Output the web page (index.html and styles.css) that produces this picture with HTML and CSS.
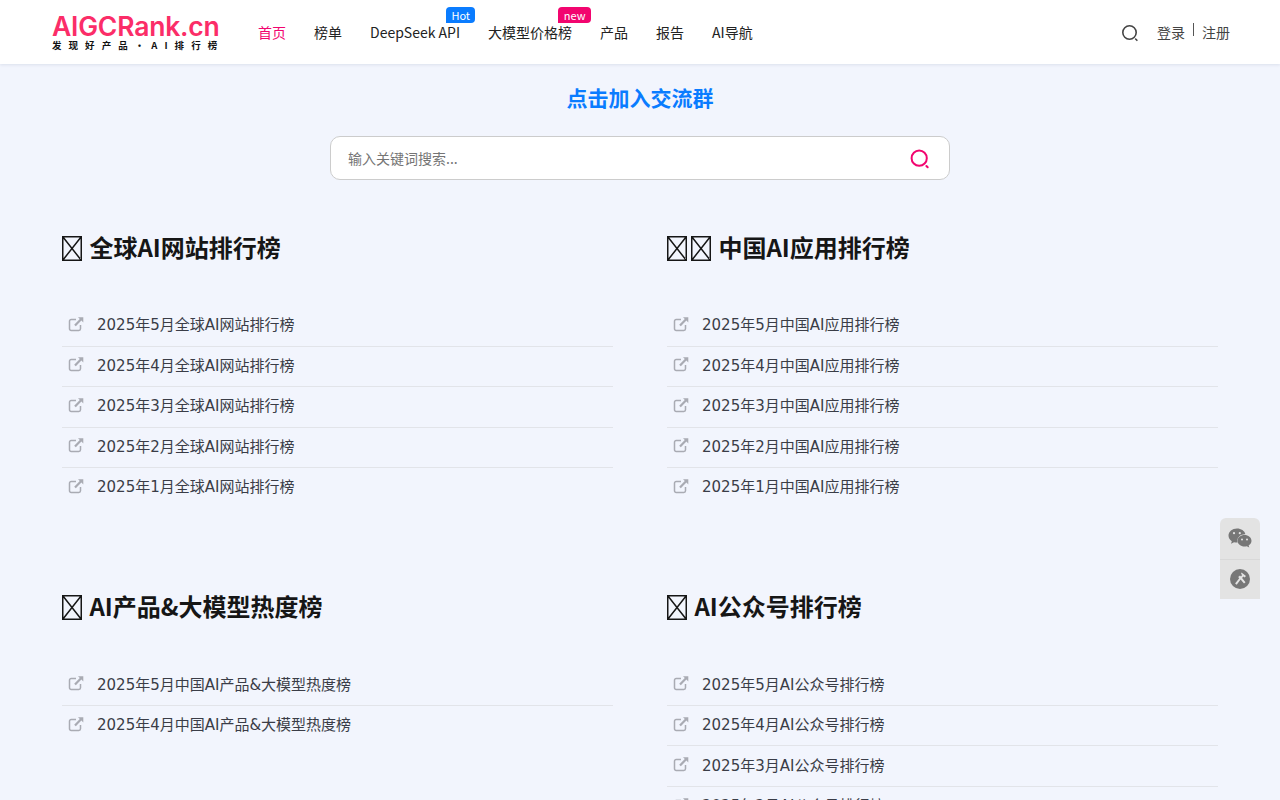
FILE: index.html
```html
<!DOCTYPE html>
<html lang="zh-CN">
<head>
  <meta charset="UTF-8" />
  <meta name="viewport" content="width=device-width, initial-scale=1.0" />
  <title>AIGCRank.cn</title>
  <link rel="stylesheet" href="styles.css">
</head>
<body>

  <svg width="0" height="0" class="sprite">
    <symbol id="icon-link" viewBox="0 0 16 16">
      <path d="M12.5 9v3.8a1.7 1.7 0 0 1-1.7 1.7H3.2a1.7 1.700 0 0 1-1.7-1.7V5.2a1.7 1.7 0 0 1 1.7-1.7H8" fill="none" stroke="currentColor" stroke-width="1.5"/>
      <path d="M10 1.2h5.3v5.3l-1.9-1.9-5.600 5.7-1.600-1.600 5.600-5.600z" fill="currentColor"/>
    </symbol>
    <symbol id="icon-tofu" viewBox="0 0 20 25">
      <path d="M.75.75h18.500v23.500H.75zM.75.75l18.500 23.500M19.250.75L.75 24.250" fill="none" stroke="currentColor" stroke-width="1.500"/>
    </symbol>
  </svg>

  <header class="topbar">
    <a class="logo" href="#">
      <span class="logo-name">AIGCRank.cn</span>
      <span class="logo-sub">发现好产品·AI排行榜</span>
    </a>
    <nav class="nav">
      <a class="nav-item active" href="#">首页</a>
      <a class="nav-item" href="#">榜单</a>
      <a class="nav-item" href="#">DeepSeek API<span class="badge badge-hot">Hot</span></a>
      <a class="nav-item" href="#">大模型价格榜<span class="badge badge-new">new</span></a>
      <a class="nav-item" href="#">产品</a>
      <a class="nav-item" href="#">报告</a>
      <a class="nav-item" href="#">AI导航</a>
    </nav>
    <div class="user-links">
      <svg class="top-search" viewBox="0 0 18 18" width="18" height="18">
        <circle cx="8.500" cy="8.500" r="6.700" fill="none" stroke="currentColor" stroke-width="1.600"/>
        <path d="M14.600 15l1.300 1.300" stroke="currentColor" stroke-width="1.600" stroke-linecap="round"/>
      </svg>
      <a href="#" class="user-link">登录</a>
      <span class="user-sep"></span>
      <a href="#" class="user-link">注册</a>
    </div>
  </header>

  <main class="main">
    <a class="join-link" href="#">点击加入交流群</a>

    <div class="search-box">
      <span class="search-text">输入关键词搜索...</span>
      <svg class="search-icon" viewBox="0 0 20 20" width="20" height="20">
        <circle cx="9.200" cy="9.200" r="7.600" fill="none" stroke="currentColor" stroke-width="2"/>
        <path d="M16.400 17l1.300 1.300" stroke="currentColor" stroke-width="2" stroke-linecap="round"/>
      </svg>
    </div>

    <div class="boards">
      <section class="board">
        <h2 class="board-title"><svg class="tofu"><use href="#icon-tofu"/></svg> 全球AI网站排行榜</h2>
        <ul class="rank-list">
          <li class="rank-row"><svg class="link-icon"><use href="#icon-link"/></svg>2025年5月全球AI网站排行榜</li>
          <li class="rank-row"><svg class="link-icon"><use href="#icon-link"/></svg>2025年4月全球AI网站排行榜</li>
          <li class="rank-row"><svg class="link-icon"><use href="#icon-link"/></svg>2025年3月全球AI网站排行榜</li>
          <li class="rank-row"><svg class="link-icon"><use href="#icon-link"/></svg>2025年2月全球AI网站排行榜</li>
          <li class="rank-row"><svg class="link-icon"><use href="#icon-link"/></svg>2025年1月全球AI网站排行榜</li>
        </ul>
      </section>

      <section class="board">
        <h2 class="board-title"><svg class="tofu"><use href="#icon-tofu"/></svg><svg class="tofu"><use href="#icon-tofu"/></svg> 中国AI应用排行榜</h2>
        <ul class="rank-list">
          <li class="rank-row"><svg class="link-icon"><use href="#icon-link"/></svg>2025年5月中国AI应用排行榜</li>
          <li class="rank-row"><svg class="link-icon"><use href="#icon-link"/></svg>2025年4月中国AI应用排行榜</li>
          <li class="rank-row"><svg class="link-icon"><use href="#icon-link"/></svg>2025年3月中国AI应用排行榜</li>
          <li class="rank-row"><svg class="link-icon"><use href="#icon-link"/></svg>2025年2月中国AI应用排行榜</li>
          <li class="rank-row"><svg class="link-icon"><use href="#icon-link"/></svg>2025年1月中国AI应用排行榜</li>
        </ul>
      </section>

      <section class="board">
        <h2 class="board-title"><svg class="tofu"><use href="#icon-tofu"/></svg> AI产品&amp;大模型热度榜</h2>
        <ul class="rank-list">
          <li class="rank-row"><svg class="link-icon"><use href="#icon-link"/></svg>2025年5月中国AI产品&amp;大模型热度榜</li>
          <li class="rank-row"><svg class="link-icon"><use href="#icon-link"/></svg>2025年4月中国AI产品&amp;大模型热度榜</li>
        </ul>
      </section>

      <section class="board">
        <h2 class="board-title"><svg class="tofu"><use href="#icon-tofu"/></svg> AI公众号排行榜</h2>
        <ul class="rank-list">
          <li class="rank-row"><svg class="link-icon"><use href="#icon-link"/></svg>2025年5月AI公众号排行榜</li>
          <li class="rank-row"><svg class="link-icon"><use href="#icon-link"/></svg>2025年4月AI公众号排行榜</li>
          <li class="rank-row"><svg class="link-icon"><use href="#icon-link"/></svg>2025年3月AI公众号排行榜</li>
          <li class="rank-row"><svg class="link-icon"><use href="#icon-link"/></svg>2025年2月AI公众号排行榜</li>
        </ul>
      </section>
    </div>
  </main>

  <aside class="side-tools">
    <a class="side-tool" href="#">
      <svg viewBox="0 0 24 20" width="24" height="20">
        <path d="M9 0.5C4.3 0.5 0.5 3.7 0.5 7.6c0 2.3 1.3 4.3 3.3 5.6L3 15.8l3-1.6c1 .3 2 .4 3 .4h.6a6 6 0 0 1-.3-1.8c0-3.7 3.4-6.6 7.6-6.6h.5C16.600 2.800 13.100 0.500 9 0.500z" fill="currentColor"/>
        <path d="M23.500 12.700c0-3.200-3.200-5.800-7-5.800s-7 2.600-7 5.800 3.200 5.800 7 5.800c.8 0 1.600-.1 2.300-.3l2.500 1.300-.7-2.100c1.800-1.100 2.900-2.800 2.900-4.700z" fill="currentColor"/>
        <circle cx="6" cy="5.200" r="1.100" fill="#e3e3e3"/>
        <circle cx="11.800" cy="5.200" r="1.100" fill="#e3e3e3"/>
        <circle cx="14" cy="11.400" r="1" fill="#e3e3e3"/>
        <circle cx="19" cy="11.400" r="1" fill="#e3e3e3"/>
      </svg>
    </a>
    <a class="side-tool" href="#">
      <svg viewBox="0 0 20 20" width="20" height="20">
        <circle cx="10" cy="10" r="10" fill="currentColor"/>
        <path d="M11.500 3.500l4.500 3.500-1.400 1.500-1.300-.9-1.200 1.500 3.400 4.200-1.500 1.300-3.400-4-3.900 5.200-1.600-1.200 4.100-5.400-1-1.200 1.800-1.500 1 1.100 1.100-1.500-1-1z" fill="#e3e3e3"/>
      </svg>
    </a>
  </aside>

</body>
</html>
```

FILE: styles.css
```css
* {
  box-sizing: border-box;
}

html,
body {
  height: 800px;
  overflow: hidden;
}

body {
  margin: 0;
  background: #f2f5fd;
  color: #222;
  font-family: "Noto Sans CJK SC", "Noto Sans", sans-serif;
}

a {
  color: inherit;
  text-decoration: none;
}

.sprite {
  display: block;
}

.topbar {
  display: flex;
  align-items: center;
  height: 64px;
  padding: 0 50px 1px 52px;
  background: #fff;
  box-shadow: 0 1px 3px rgba(30, 50, 90, 0.1);
}

.logo {
  display: flex;
  flex-direction: column;
  width: 168px;
  margin-right: 38px;
}

.logo-name {
  font-family: Inter, "Liberation Sans", sans-serif;
  font-size: 26.5px;
  font-weight: 600;
  line-height: 26px;
  letter-spacing: -0.2px;
  color: #fb2d68;
}

.logo-sub {
  font-size: 9.5px;
  font-weight: 700;
  line-height: 12px;
  letter-spacing: 7.05px;
  white-space: nowrap;
  color: #111;
}

.nav {
  display: flex;
  gap: 28px;
  flex: 1;
}

.nav-item {
  position: relative;
  font-size: 14px;
  line-height: 22px;
  color: #222;
}

.nav-item.active {
  color: #f2056f;
}

.badge {
  position: absolute;
  top: -14px;
  height: 16px;
  padding: 0 5px;
  border-radius: 4px 4px 4px 0;
  font-size: 11px;
  line-height: 16px;
  color: #fff;
}

.badge-hot {
  right: -15px;
  background: #0a7cff;
}

.badge-new {
  right: -19px;
  padding: 0 5.5px;
  background: #f2056f;
}

.user-links {
  display: flex;
  align-items: center;
  font-size: 14px;
  color: #444;
}

.top-search {
  margin-right: 18px;
  color: #444;
  transform: translateY(1px);
}

.user-sep {
  width: 1px;
  height: 13px;
  margin: 0 8px;
  background: #555;
  transform: translateY(-2px);
}

.main {
  padding: 0 62px;
}

.join-link {
  display: block;
  margin-top: 18px;
  text-align: center;
  font-size: 21px;
  font-weight: 700;
  line-height: 30px;
  color: #0a7cff;
}

.search-box {
  display: flex;
  align-items: center;
  justify-content: space-between;
  width: 620px;
  height: 44px;
  margin: 24px auto 0;
  padding: 0 19px 0 17px;
  background: #fff;
  border: 1px solid #ccc;
  border-radius: 10px;
}

.search-text {
  font-size: 14px;
  color: #757575;
}

.search-icon {
  color: #f2056f;
  transform: translateY(1px);
}

.boards {
  display: grid;
  grid-template-columns: 551px 551px;
  column-gap: 54px;
  margin-top: 49px;
}

.board {
  height: 359.4px;
}

.board-title {
  margin: 0;
  font-size: 24px;
  font-weight: 700;
  line-height: 36px;
  color: #161616;
}

.tofu {
  width: 20px;
  height: 25px;
  margin-right: 4px;
  vertical-align: -4px;
}

.tofu:last-of-type {
  margin-right: 2px;
}

.rank-list {
  list-style: none;
  margin: 41px 0 0;
  padding: 0;
}

.rank-row {
  display: flex;
  align-items: center;
  height: 40.5px;
  padding: 0 0 4px 6px;
  border-bottom: 1px solid #e2e4e9;
  font-family: "DejaVu Sans", "Noto Sans CJK SC", sans-serif;
  font-size: 15px;
  color: #3a3d47;
}

.rank-row:last-child {
  border-bottom-color: transparent;
}

.link-icon {
  width: 16px;
  height: 16px;
  margin-right: 13px;
  color: #a9abb3;
}

.side-tools {
  position: fixed;
  top: 518px;
  right: 20px;
  width: 40px;
  background: #e3e3e3;
  border-radius: 6px 6px 0 0;
}

.side-tool {
  display: flex;
  align-items: center;
  justify-content: center;
  height: 40.5px;
  color: #777;
}

.side-tool + .side-tool {
  border-top: 1px solid #d8d8d8;
}
```
